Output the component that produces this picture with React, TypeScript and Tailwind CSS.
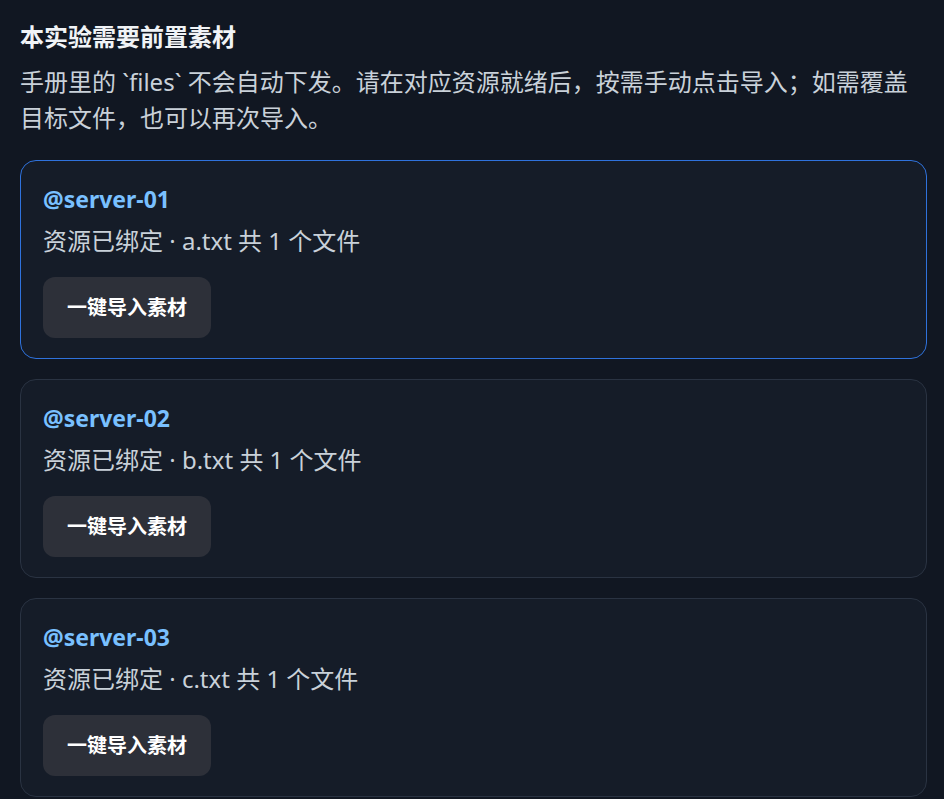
const servers = [
  { name: "@server-01", file: "a.txt", active: true },
  { name: "@server-02", file: "b.txt", active: false },
  { name: "@server-03", file: "c.txt", active: false },
];

function ServerCard({ name, file, active }: { name: string; file: string; active: boolean }) {
  return (
    <div
      className={`rounded-[16px] border bg-[#151c28] px-[22px] pt-[23px] pb-[20px] ${
        active ? "border-[#2f72dc]" : "border-[#2a3342]"
      }`}
    >
      <div className="text-[23px] leading-[30px] font-bold text-[#79c0ff]">{name}</div>
      <div className="mt-[12px] text-[24px] leading-[30px] text-[#c9d1d9]">
        资源已绑定 · {file} 共 1 个文件
      </div>
      <button className="mt-[21px] h-[61px] rounded-[12px] bg-[#2d3039] px-[24px] text-[20px] font-bold text-white">
        一键导入素材
      </button>
    </div>
  );
}

export default function App() {
  return (
    <div
      className="min-h-screen bg-[#111722] pt-[20px] pr-[17px] pb-[20px] pl-[20px]"
      style={{ fontFamily: '"Noto Sans", "Noto Sans CJK SC", sans-serif' }}
    >
      <h2 className="text-[24px] leading-[34px] font-bold text-[#f0f3f6]">本实验需要前置素材</h2>
      <p className="mt-[10px] text-[24px] leading-[36px] text-[#c9d1d9]">
        手册里的 `files` 不会自动下发。请在对应资源就绪后，按需手动点击导入；如需覆盖目标文件，也可以再次导入。
      </p>
      <div className="mt-[24px] flex flex-col gap-[20px]">
        {servers.map((s) => (
          <ServerCard key={s.name} {...s} />
        ))}
      </div>
    </div>
  );
}
